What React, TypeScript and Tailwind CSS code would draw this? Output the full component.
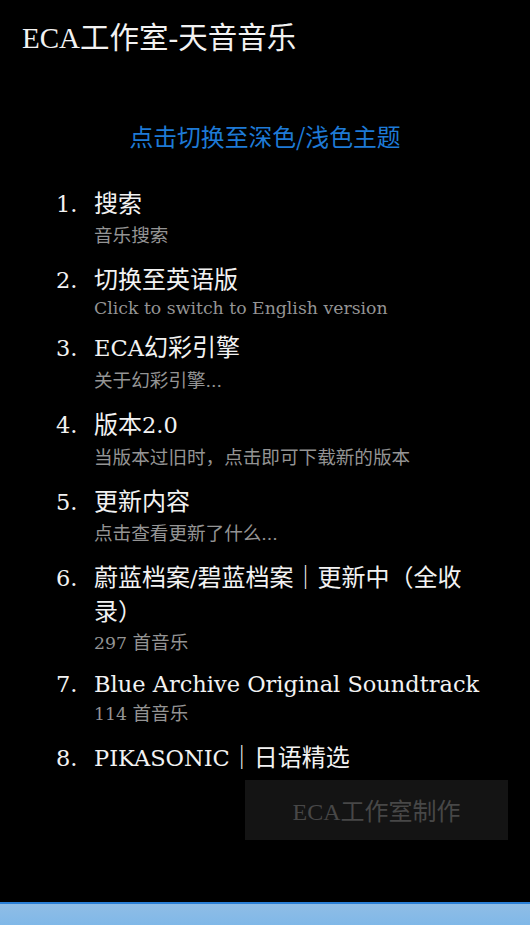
import React from "react";

type Seg = { t: string; cjk: boolean };

function split(s: string): Seg[] {
  const out: Seg[] = [];
  const re = /[\u3000-\u9fff\uff00-\uffef]+/g;
  let last = 0;
  let m: RegExpExecArray | null;
  while ((m = re.exec(s))) {
    if (m.index > last) out.push({ t: s.slice(last, m.index), cjk: false });
    out.push({ t: m[0], cjk: true });
    last = m.index + m[0].length;
  }
  if (last < s.length) out.push({ t: s.slice(last), cjk: false });
  return out;
}

function Mixed({ text, latin }: { text: string; latin: string }) {
  return (
    <>
      {split(text).map((s, i) =>
        s.cjk ? (
          <span key={i}>{s.t}</span>
        ) : (
          <span key={i} className={latin}>
            {s.t}
          </span>
        )
      )}
    </>
  );
}

const CJK = "font-['Noto_Sans_CJK_SC',sans-serif]";
const LAT_TITLE = "font-['DejaVu_Serif',serif] text-[22.5px] leading-none";
const LAT_SUB = "font-['DejaVu_Serif',serif] text-[17.3px] leading-none";

const items: { title: string; sub?: string; tl: string; sl: string }[] = [
  { title: "搜索", sub: "音乐搜索", tl: "leading-[34px]", sl: "leading-[30px]" },
  { title: "切换至英语版", sub: "Click to switch to English version", tl: "leading-[34px]", sl: "leading-[22px]" },
  { title: "ECA幻彩引擎", sub: "关于幻彩引擎...", tl: "leading-[34px]", sl: "leading-[31px]" },
  { title: "版本2.0", sub: "当版本过旧时，点击即可下载新的版本", tl: "leading-[34px]", sl: "leading-[31px]" },
  { title: "更新内容", sub: "点击查看更新了什么...", tl: "leading-[34px]", sl: "leading-[30px]" },
  { title: "蔚蓝档案/碧蓝档案｜更新中（全收录）", sub: "297 首音乐", tl: "leading-[34px]", sl: "leading-[28px]" },
  { title: "Blue Archive Original Soundtrack", sub: "114 首音乐", tl: "leading-[30px]", sl: "leading-[30px]" },
  { title: "PIKASONIC｜日语精选", tl: "leading-[34px]", sl: "leading-[30px]" },
];

export default function App() {
  return (
    <div className={`flex min-h-[925px] flex-col bg-black text-[#f2f2f2] ${CJK}`}>
      <h1 className="pl-[22px] pt-[15px] text-[29.5px] leading-[40px]">
        <Mixed text="ECA工作室-天音音乐" latin="font-['Liberation_Serif',serif] text-[29px] leading-none" />
      </h1>
      <div className="mt-[64px] text-center text-[23.8px] leading-[34px] text-[#1e7ad6]">
        点击切换至深色/浅色主题
      </div>
      <ol className="mt-[32px] flex flex-col gap-[12px] pl-[56px] pr-[44px]">
        {items.map((it, i) => (
          <li key={i} className="flex">
            <div className={`w-[38px] shrink-0 text-[24px] ${it.tl}`}>
              <span className={LAT_TITLE}>{i + 1}.</span>
            </div>
            <div className="min-w-0 flex-1">
              <div className={`text-[24px] ${it.tl}`}>
                <Mixed text={it.title} latin={LAT_TITLE} />
              </div>
              {it.sub && (
                <div className={`text-[18.6px] text-[#949494] ${it.sl}`}>
                  <Mixed text={it.sub} latin={LAT_SUB} />
                </div>
              )}
            </div>
          </li>
        ))}
      </ol>
      <div className="mr-[22px] mt-[7px] flex h-[60px] w-[263px] items-center justify-center self-end bg-[#141414] text-[24px] leading-[34px] text-[#474747]">
        <span>
          <Mixed text="ECA工作室制作" latin="font-['Liberation_Serif',serif] text-[24px] leading-none" />
        </span>
      </div>
      <div className="mt-auto h-[23px] border-t-2 border-[#2a7fd6] bg-gradient-to-b from-[#8fbde6] to-[#80b8e8]" />
    </div>
  );
}
